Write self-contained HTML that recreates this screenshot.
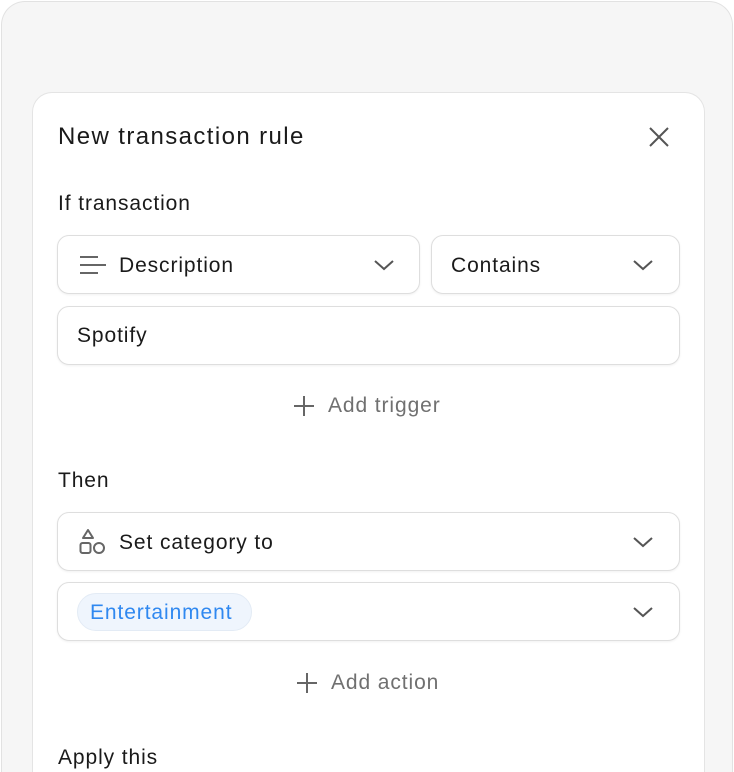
<!DOCTYPE html>
<html><head><style>
*{box-sizing:border-box;margin:0;padding:0}
html,body{width:734px;height:772px;overflow:hidden}
body{position:relative;background:#fff;font-family:"Liberation Sans",sans-serif;color:#1a1a1a}
.outer{position:absolute;left:1px;top:1px;width:732px;height:771px;border:1px solid #e2e2e2;border-bottom:none;border-radius:24px 24px 0 0;background:#f6f6f6}
.card{position:absolute;left:32px;top:92px;width:673px;height:680px;background:#fff;border:1px solid #e4e4e4;border-bottom:none;border-radius:20px 20px 0 0}
.t{position:absolute;white-space:nowrap;font-size:21px;letter-spacing:0.9px}
.box{position:absolute;background:#fff;border:1px solid #dedede;border-radius:12px;box-shadow:0 1px 2px rgba(0,0,0,.06)}
.chev{position:absolute;width:22px;height:12px}
</style></head><body>
<div class="outer"></div>
<div class="card"></div>
<div class="t" style="left:58px;top:123px;font-size:24px;letter-spacing:1.4px">New transaction rule</div>
<svg style="position:absolute;left:648px;top:126px" width="22" height="22"><path d="M2 2L20 20M20 2L2 20" stroke="#555" stroke-width="2"/></svg>
<div class="t" style="left:58px;top:192px">If transaction</div>

<div class="box" style="left:57px;top:235px;width:363px;height:59px"></div>
<svg style="position:absolute;left:79px;top:255px" width="28" height="20"><path d="M1 2H19M1 10H27M1 18H19" stroke="#666" stroke-width="2"/></svg>
<div class="t" style="left:119px;top:254px">Description</div>
<svg class="chev" style="left:373px;top:259px"><path d="M2 2L11 10L20 2" fill="none" stroke="#555" stroke-width="2"/></svg>

<div class="box" style="left:431px;top:235px;width:249px;height:59px"></div>
<div class="t" style="left:451px;top:254px">Contains</div>
<svg class="chev" style="left:632px;top:259px"><path d="M2 2L11 10L20 2" fill="none" stroke="#555" stroke-width="2"/></svg>

<div class="box" style="left:57px;top:306px;width:623px;height:59px"></div>
<div class="t" style="left:77px;top:324px">Spotify</div>

<svg style="position:absolute;left:293px;top:395px" width="22" height="22"><path d="M11 1V21M1 11H21" stroke="#666" stroke-width="2"/></svg>
<div class="t" style="left:328px;top:394px;color:#707070">Add trigger</div>

<div class="t" style="left:58px;top:469px">Then</div>

<div class="box" style="left:57px;top:512px;width:623px;height:59px"></div>
<svg style="position:absolute;left:79px;top:528px" width="28" height="28"><path d="M9 2L4 10H14Z" fill="none" stroke="#666" stroke-width="2" stroke-linejoin="round"/><rect x="1.5" y="15" width="10" height="10" rx="2" fill="none" stroke="#666" stroke-width="2"/><circle cx="20" cy="20" r="5" fill="none" stroke="#666" stroke-width="2"/></svg>
<div class="t" style="left:119px;top:531px">Set category to</div>
<svg class="chev" style="left:632px;top:536px"><path d="M2 2L11 10L20 2" fill="none" stroke="#555" stroke-width="2"/></svg>

<div class="box" style="left:57px;top:582px;width:623px;height:59px"></div>
<div style="position:absolute;left:77px;top:593px;width:175px;height:38px;border-radius:19px;background:#eff5fd;border:1px solid #e3ebf5"></div>
<div class="t" style="left:90px;top:601px;color:#2f88f0">Entertainment</div>
<svg class="chev" style="left:632px;top:606px"><path d="M2 2L11 10L20 2" fill="none" stroke="#555" stroke-width="2"/></svg>

<svg style="position:absolute;left:296px;top:672px" width="22" height="22"><path d="M11 1V21M1 11H21" stroke="#666" stroke-width="2"/></svg>
<div class="t" style="left:331px;top:671px;color:#707070">Add action</div>

<div class="t" style="left:58px;top:746px">Apply this</div>
</body></html>
